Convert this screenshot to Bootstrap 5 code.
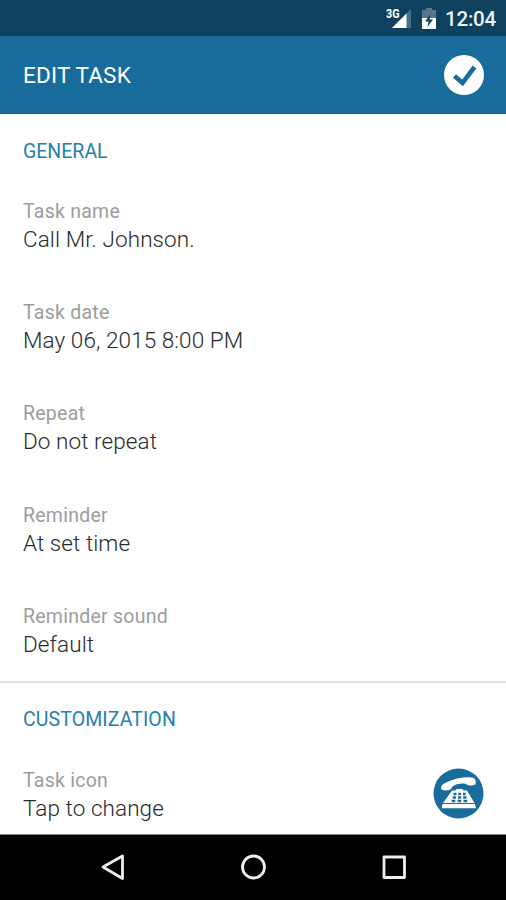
<!DOCTYPE html>
<html lang="en">
<head>
<meta charset="utf-8">
<meta name="viewport" content="width=device-width, initial-scale=1">
<title>Edit task</title>
<link href="https://cdn.jsdelivr.net/npm/bootstrap@5.3.0/dist/css/bootstrap.min.css" rel="stylesheet">
<style>
body { font-family: Roboto, "Liberation Sans", sans-serif; background: #fff; }
.screen { height: 900px; }
.status-bar { height: 36px; background: #0d415e; padding-right: 10px; }
.clock { font-size: 20.5px; font-weight: 500; line-height: 36px; padding-top: 1px; letter-spacing: -.2px; color: #eef2f5; }
.app-bar { height: 78px; background: #186c9c; padding: 0 22px 0 23px; border-bottom: 1px solid #10608e; }
.app-title { font-size: 22.5px; line-height: 28px; letter-spacing: .2px; padding-top: 1px; }
.task-section { padding: 0 22px 0 23px; }
.task-section + .task-section { border-top: 2px solid #dfdfdf; }
.section-title { font-size: 19.5px; line-height: 24px; padding-top: 26px; height: 61px; color: #2580ac; }
.task-section + .task-section .section-title { padding-top: 25px; letter-spacing: .1px; }
.field-row { height: 101.2px; padding-top: 25px; }
.field-label { font-size: 19.5px; line-height: 24px; color: #9c9c9c; letter-spacing: .25px; }
.field-value { font-size: 22.5px; line-height: 30px; font-weight: 300; color: #2a2a2a; letter-spacing: .08px; }
.call-icon { margin-top: -1px; }
.nav-keys { height: 67px; background: #000; border-top: 1px solid #888; }
</style>
</head>
<body>
<div class="screen d-flex flex-column overflow-hidden">
  <header>
    <div class="status-bar d-flex align-items-center justify-content-end">
      <svg width="27" height="24" viewBox="0 0 27 24">
        <path d="M25 3V22H6Z" fill="#49708a"/>
        <path d="M20.500 7.500V22H6Z" fill="#fff"/>
        <text x="0" y="12" font-family="Roboto, sans-serif" font-size="12.500" font-weight="700" fill="#fff" stroke="#0d415e" stroke-width="1.500" paint-order="stroke" textLength="13.500" lengthAdjust="spacingAndGlyphs">3G</text>
      </svg>
      <svg class="ms-2" width="16" height="22" viewBox="0 0 16 22">
        <path d="M5 1h6v2h4v8H1V3h4z" fill="#55788e"/>
        <path d="M1 11h14v11H1z" fill="#fff"/>
        <path d="M9.500 7L4 14.500h3.500L6.500 20l5.500-7.500H8.500z" fill="#0d415e"/>
      </svg>
      <span class="clock ms-2">12:04</span>
    </div>
    <div class="app-bar d-flex align-items-center justify-content-between text-white">
      <h1 class="app-title fw-normal mb-0">EDIT TASK</h1>
      <button class="btn p-0 border-0 lh-1" type="button" aria-label="Save">
        <svg class="d-block" width="40" height="40" viewBox="0 0 40 40">
          <circle cx="20" cy="20" r="20" fill="#fff"/>
          <path d="M10.500 21L18.500 28L30.500 12" fill="none" stroke="#186c9c" stroke-width="4.600"/>
        </svg>
      </button>
    </div>
  </header>
  <main class="flex-grow-1 overflow-hidden">
    <section class="task-section">
      <h2 class="section-title fw-normal mb-0">GENERAL</h2>
      <div class="field-row"><div class="field-label">Task name</div><div class="field-value">Call Mr. Johnson.</div></div>
      <div class="field-row"><div class="field-label">Task date</div><div class="field-value">May 06, 2015 8:00 PM</div></div>
      <div class="field-row"><div class="field-label">Repeat</div><div class="field-value">Do not repeat</div></div>
      <div class="field-row"><div class="field-label">Reminder</div><div class="field-value">At set time</div></div>
      <div class="field-row"><div class="field-label">Reminder sound</div><div class="field-value">Default</div></div>
    </section>
    <section class="task-section">
      <h2 class="section-title fw-normal mb-0">CUSTOMIZATION</h2>
      <div class="field-row d-flex justify-content-between">
        <div><div class="field-label">Task icon</div><div class="field-value">Tap to change</div></div>
        <svg class="call-icon" width="51" height="51" viewBox="0 0 51 51">
          <circle cx="25.500" cy="25.500" r="25" fill="#186c9c"/>
          <path d="M8.500 21.500C7 18 9.500 16 13.500 14.200C21 10.800 31 8.700 38.500 9.500C42.500 10 43.500 13 42.500 16.500C39 18.200 35 17.800 32.500 15.800C27 15 23 16 19.500 18.500C18.500 22 13 24 8.500 21.500Z" fill="#fff"/>
          <path d="M19 22.500h3.500l1-1.500h6l1 1.500H34L41.500 35H10z" fill="#fff"/>
          <path d="M9.500 36h32.500l1 4.300H8.700z" fill="#fff"/>
          <path d="M20.500 26h3M25.300 26h2.700M30 26h2.700M19.700 29.500h3.300M25 29.500h3.200M30.200 29.500h3.300M18.700 33h3.600M24.700 33h3.600M30.500 33h3.700" stroke="#186c9c" stroke-width="2.400"/>
        </svg>
      </div>
    </section>
  </main>
  <nav class="nav-keys d-flex align-items-center justify-content-center" aria-label="System">
    <svg width="310" height="30" viewBox="0 0 310 30" fill="none" stroke="#eee" stroke-width="2.800" stroke-linejoin="round">
      <path d="M5 14L24.500 3V25.500Z"/>
      <circle cx="155.500" cy="14" r="11"/>
      <rect x="286" y="4" width="20.500" height="20.500"/>
    </svg>
  </nav>
</div>
<script src="https://cdn.jsdelivr.net/npm/bootstrap@5.3.0/dist/js/bootstrap.bundle.min.js"></script>
</body>
</html>
